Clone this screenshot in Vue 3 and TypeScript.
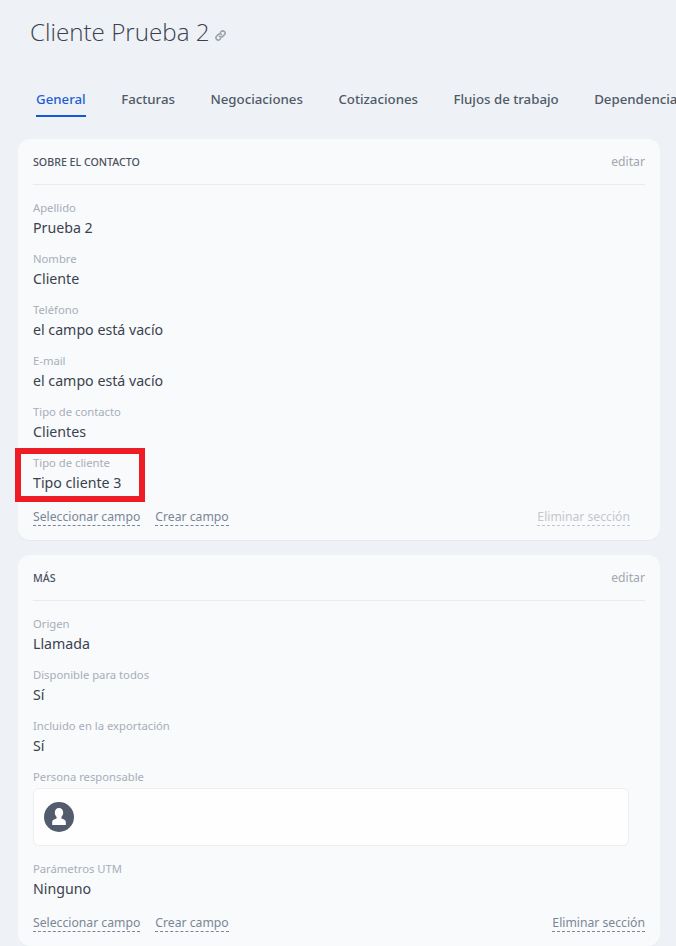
<script setup lang="ts">
interface Field {
  label: string
  value: string
}

const tabs = ['General', 'Facturas', 'Negociaciones', 'Cotizaciones', 'Flujos de trabajo', 'Dependencias']

const contactFields: Field[] = [
  { label: 'Apellido', value: 'Prueba 2' },
  { label: 'Nombre', value: 'Cliente' },
  { label: 'Teléfono', value: 'el campo está vacío' },
  { label: 'E-mail', value: 'el campo está vacío' },
  { label: 'Tipo de contacto', value: 'Clientes' },
]

const moreFields: Field[] = [
  { label: 'Origen', value: 'Llamada' },
  { label: 'Disponible para todos', value: 'Sí' },
  { label: 'Incluido en la exportación', value: 'Sí' },
]
</script>

<template>
  <div class="page">
    <h1 class="title">
      Cliente Prueba 2
      <svg class="link-icon" viewBox="0 0 24 24" width="11" height="11" fill="none" stroke="#9aa1ab" stroke-width="3.4" stroke-linecap="round">
        <path d="M10 14a5 5 0 0 0 7 0l4-4a5 5 0 0 0-7-7l-2 2" />
        <path d="M14 10a5 5 0 0 0-7 0l-4 4a5 5 0 0 0 7 7l2-2" />
      </svg>
    </h1>

    <nav class="tabs">
      <a v-for="(tab, i) in tabs" :key="tab" class="tab" :class="{ active: i === 0 }">{{ tab }}</a>
    </nav>

    <section class="card first">
      <header class="card-head">
        <span class="card-title">SOBRE EL CONTACTO</span>
        <span class="edit">editar</span>
      </header>
      <div v-for="f in contactFields" :key="f.label" class="field">
        <div class="label">{{ f.label }}</div>
        <div class="value">{{ f.value }}</div>
      </div>
      <div class="field highlighted">
        <div class="label">Tipo de cliente</div>
        <div class="value">Tipo cliente 3</div>
        <div class="red-box"></div>
      </div>
      <footer class="card-foot">
        <a class="action">Seleccionar campo</a>
        <a class="action">Crear campo</a>
        <a class="action remove disabled">Eliminar sección</a>
      </footer>
    </section>

    <section class="card">
      <header class="card-head">
        <span class="card-title">MÁS</span>
        <span class="edit">editar</span>
      </header>
      <div v-for="f in moreFields" :key="f.label" class="field">
        <div class="label">{{ f.label }}</div>
        <div class="value">{{ f.value }}</div>
      </div>
      <div class="field tall">
        <div class="label">Persona responsable</div>
        <div class="person-box">
          <svg class="avatar" viewBox="0 0 30 30" width="30" height="30">
            <circle cx="15" cy="15" r="15" fill="#535c6c" />
            <path fill="#fff" d="M15 6c-2.500 0-4.200 1.900-4.200 4.600 0 2 .8 3.500 1.800 4.400v1.500c-2 .6-4.400 1.400-4.400 3.200V23h13.600v-3.300c0-1.800-2.400-2.600-4.400-3.200V15c1-.9 1.800-2.400 1.800-4.400 0-2.700-1.700-4.600-4.200-4.600z" />
          </svg>
        </div>
      </div>
      <div class="field">
        <div class="label">Parámetros UTM</div>
        <div class="value">Ninguno</div>
      </div>
      <footer class="card-foot last">
        <a class="action">Seleccionar campo</a>
        <a class="action">Crear campo</a>
        <a class="action end">Eliminar sección</a>
      </footer>
    </section>
  </div>
</template>

<style>
html,
body {
  margin: 0;
  overflow: hidden;
  background: #eef1f5;
}
</style>

<style scoped>
.page {
  height: 946px;
  overflow: hidden;
  box-sizing: border-box;
  padding: 0 16px 0 18px;
  background: #eef1f5;
  font-family: "Noto Sans", "Open Sans", sans-serif;
  color: #313942;
}

.title {
  margin: 0;
  padding: 15px 0 0 12px;
  height: 52px;
  box-sizing: border-box;
  font-family: "Open Sans", sans-serif;
  font-size: 24.2px;
  line-height: 34px;
  font-weight: 300;
  color: #3a4150;
  white-space: nowrap;
}

.link-icon {
  margin-left: -1px;
}

.tabs {
  display: flex;
  gap: 35.5px;
  margin-top: 30px;
  padding-left: 18px;
  height: 57px;
  white-space: nowrap;
}

.tab {
  height: 35px;
  box-sizing: border-box;
  padding-top: 8px;
  font-size: 13.25px;
  line-height: 18px;
  font-weight: 500;
  color: #4f5a68;
}

.tab.active {
  color: #1f5fd6;
  border-bottom: 2px solid #1557d6;
}

.card {
  background: #f9fafc;
  border-radius: 12px;
  padding: 0 15px;
  box-shadow: 0 1px 1px rgba(0, 0, 0, 0.03);
}

.card.first {
  margin-bottom: 15px;
}

.card-head {
  display: flex;
  justify-content: space-between;
  align-items: center;
  height: 45px;
  margin-bottom: 14px;
  border-bottom: 1px solid #e8eaed;
}

.card-title {
  font-size: 10.65px;
  font-weight: 500;
  color: #4a5260;
}

.edit {
  font-size: 12.2px;
  color: #a3a7ad;
}

.field {
  position: relative;
  height: 51px;
}

.field.tall {
  height: 92px;
}

.label {
  font-size: 11.25px;
  line-height: 18px;
  color: #a7aeb9;
}

.value {
  margin-top: 1px;
  font-size: 14.2px;
  line-height: 20px;
  color: #3a424e;
}

.red-box {
  position: absolute;
  left: -18px;
  top: -6px;
  width: 130px;
  height: 54px;
  box-sizing: border-box;
  border: 6px solid #ee1c25;
}

.person-box {
  display: flex;
  align-items: center;
  width: 596px;
  height: 58px;
  box-sizing: border-box;
  margin-top: 2px;
  padding-left: 10px;
  background: #fefefe;
  border: 1px solid #eceef1;
  border-radius: 6px;
}

.card-foot {
  display: flex;
  gap: 15px;
  height: 32px;
  padding-top: 1px;
  box-sizing: border-box;
  margin-top: 3px;
  padding-right: 15px;
}

.card-foot.last {
  padding-right: 0;
}

.action {
  height: 16px;
  font-size: 12.2px;
  line-height: 15px;
  color: #7a8696;
  border-bottom: 1px dashed #7a8696;
}

.remove,
.end {
  margin-left: auto;
}

.disabled {
  color: #c4c7cc;
  border-bottom-color: #c4c7cc;
}
</style>
